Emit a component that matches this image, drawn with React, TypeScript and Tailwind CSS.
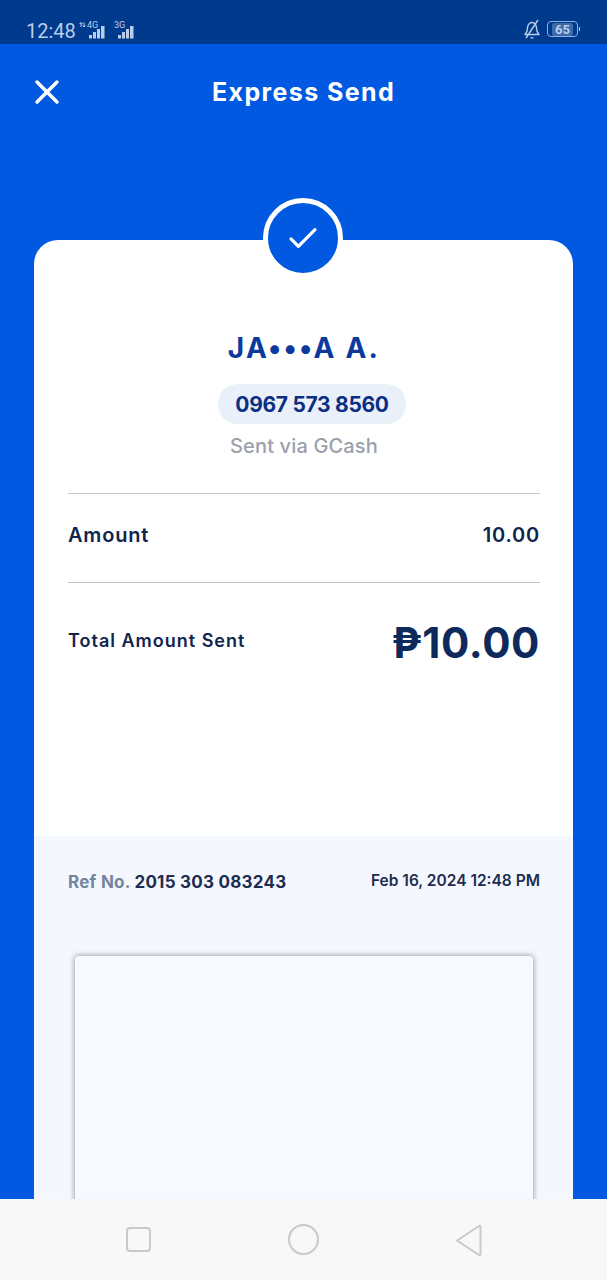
import { X } from "lucide-react";

const FONT = "font-['Inter','Liberation_Sans',sans-serif]";

function SignalBars({ label, hasArrows }: { label: string; hasArrows?: boolean }) {
  return (
    <svg width="26" height="20" viewBox="0 0 26 20" className="text-[#b9cdea]">
      {hasArrows && (
        <path d="M2 6V1.500M2 1.500L.5 3M2 1.500L3.500 3M5 1.500V6M5 6L3.500 4.500M5 6L6.500 4.500" stroke="currentColor" strokeWidth="1" fill="none" />
      )}
      <text x={hasArrows ? 8 : 6} y="7" fontSize="9" fill="currentColor" fontFamily="Roboto, sans-serif">{label}</text>
      <rect x="10" y="14" width="3" height="3.500" fill="currentColor" />
      <rect x="14" y="11" width="3" height="6.500" fill="currentColor" />
      <rect x="18" y="8" width="3" height="9.500" fill="currentColor" />
      <rect x="22" y="5" width="3.500" height="12.500" fill="currentColor" />
    </svg>
  );
}

function StatusBar() {
  return (
    <div className="flex h-[44px] shrink-0 items-end justify-between bg-[#003a8c] pb-[0px] pl-[26px] pr-[29px] text-[#b9cdea]">
      <div className="flex items-center">
        <span className="mr-[3px] font-['Roboto',sans-serif] text-[20px] leading-[26px]">12:48</span>
        <SignalBars label="4G" hasArrows />
        <span className="w-[3px]" />
        <SignalBars label="3G" />
      </div>
      <div className="flex items-center gap-[6px] pb-[5px]">
        <svg width="18" height="20" viewBox="0 0 18 20" fill="none" stroke="currentColor" strokeWidth="1.4" strokeLinejoin="round">
          <path d="M2 15.500c1.500-1.500 2.500-3 2.500-6.500C4.500 6 6.500 3.500 9 3.500S13.500 6 13.500 9c0 3.500 1 5 2.500 6.500Z" />
          <path d="M7.500 18.500c1 .8 2 .8 3 0" />
          <path d="M15 1L3 19" />
        </svg>
        <div className="relative flex h-[16px] w-[31px] items-center justify-center rounded-[4px] border border-[#8fb0de] font-['Roboto',sans-serif] text-[13px] font-bold leading-none">
          <span className="rounded-[2px] bg-[#3d6aab] px-[3px]">65</span>
          <span className="absolute right-[-3px] top-[5px] h-[4px] w-[1.500px] bg-[#b9cdea]" />
        </div>
      </div>
    </div>
  );
}

function Header() {
  return (
    <div className="relative flex h-[96px] items-center justify-center">
      <X size={40} strokeWidth={2.1} className="absolute left-[27px] top-[28px] text-white" />
      <h1 className="text-[25px] font-bold leading-none tracking-[1.4px] text-white">Express Send</h1>
    </div>
  );
}

function NavBar() {
  return (
    <div className="flex h-[81px] shrink-0 items-start justify-between bg-[#f8f8f8] pl-[126px] pr-[124px] pt-[25px]">
      <div className="mt-[3px] h-[25px] w-[25px] rounded-[4px] border-2 border-[#c9c9c9]" />
      <div className="h-[31px] w-[31px] rounded-full border-2 border-[#c9c9c9]" />
      <svg width="28" height="32" viewBox="0 0 28 32" fill="none" stroke="#c9c9c9" strokeWidth="2" strokeLinejoin="round">
        <path d="M2 16.500L24 2c.7-.4 1.500 0 1.500 1v27c0 1-.8 1.400-1.500 1Z" />
      </svg>
    </div>
  );
}

export default function App() {
  return (
    <div className={`flex h-[1280px] w-[607px] flex-col overflow-hidden bg-[#0059e0] ${FONT}`}>
      <StatusBar />
      <div className="min-h-0 flex-1 overflow-hidden">
        <Header />
        <div className="relative mx-[34px] mt-[100px] w-[539px] rounded-t-[24px] bg-white">
          {/* check badge sitting over the card edge */}
          <div className="absolute left-[229px] top-[-42px] flex h-[80px] w-[80px] items-center justify-center rounded-full border-[5px] border-white bg-[#0059e0]">
            <svg width="30" height="24" viewBox="0 0 32 26" fill="none" stroke="white" strokeWidth="3.5" strokeLinecap="round" strokeLinejoin="round">
              <path d="M3 14l8 8L29 4" />
            </svg>
          </div>

          <div className="flex flex-col items-center pl-[34px] pr-[33px] pt-[91px]">
            <div className="text-[28px] font-bold leading-[34px] tracking-[2.200px] text-[#0b3a9c]">JA•••A A.</div>
            <div className="ml-[16px] mt-[19px] rounded-full bg-[#eaf0f9] px-[17px] pb-[4px] pt-[6px] text-[21px] font-bold leading-[30px] tracking-[-0.3px] text-[#0b2f84]">0967 573 8560</div>
            <div className="mt-[9px] text-[20px] font-medium leading-[26px] tracking-[0.15px] text-[#9aa1ac]">Sent via GCash</div>

            <div className="mt-[34px] flex h-[90px] w-full items-center justify-between border-y border-[#bfc5cc] pb-[7px] text-[20px] font-semibold tracking-[0.8px] text-[#10254e]">
              <span>Amount</span>
              <span>10.00</span>
            </div>

            <div className="flex h-[120px] w-full items-center justify-between text-[#10254e]">
              <span className="mb-[5px] text-[18px] font-semibold tracking-[1px]">Total Amount Sent</span>
              <span className="text-[42px] font-bold leading-none tracking-[0.6px] text-[#0e2a5c]">₱10.00</span>
            </div>
          </div>

          <div className="mt-[133px] bg-[#f4f8fe] pl-[34px] pr-[33px] pt-[35px]">
            <div className="flex items-start justify-between text-[#1d2c50]">
              <div className="text-[17px] font-bold leading-[22px] tracking-[0.25px]">
                <span className="text-[#74859c]">Ref No. </span>
                <span>2015 303 083243</span>
              </div>
              <div className="text-[15.500px] font-semibold leading-[20px]">Feb 16, 2024 12:48 PM</div>
            </div>
            <div className="mx-[7px] mt-[63px] h-[300px] rounded-[4px] bg-[#f6f9ff] shadow-[0_0_5px_1px_rgba(100,110,135,0.6)]" />
          </div>
        </div>
      </div>
      <NavBar />
    </div>
  );
}
